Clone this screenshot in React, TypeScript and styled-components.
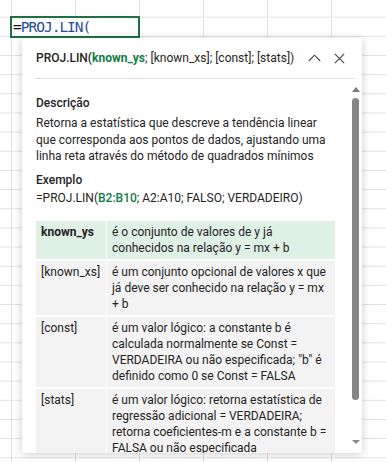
import React from 'react';
import styled, { createGlobalStyle } from 'styled-components';

const GlobalStyle = createGlobalStyle`
  html, body {
    margin: 0;
    padding: 0;
    background: #fff;
  }
  * {
    box-sizing: border-box;
  }
`;

const ROW_H = 19.17;

// planilha de fundo
const Sheet = styled.div`
  position: relative;
  width: 386px;
  height: 462px;
  overflow: hidden;
  background-color: #fff;
  background-image: linear-gradient(to right, #e1e1e1 0 1px, transparent 1px),
    linear-gradient(to bottom, #e1e1e1 0 1px, transparent 1px);
  background-size: 64px ${ROW_H}px;
  background-position: 11px 16.7px;
`;

const ActiveCell = styled.div`
  position: absolute;
  left: 10px;
  top: 16px;
  width: 130px;
  height: 22px;
  border: 2px solid #1e7145;
  background: #fff;
  display: flex;
  align-items: center;
  padding-left: 1px;
  font-family: 'DejaVu Sans Mono', monospace;
  font-size: 14.5px;
  letter-spacing: -1px;
  color: #1f4e96;
`;

const Eq = styled.span`
  color: #111;
`;

const Popup = styled.div`
  position: absolute;
  left: 22px;
  top: 38px;
  width: 340px;
  height: 415px;
  background: #fff;
  border-radius: 2px;
  box-shadow: 0 1px 9px rgba(0, 0, 0, 0.2);
  display: flex;
  flex-direction: column;
  font-family: Roboto, 'Noto Sans', sans-serif;
  color: #242424;
`;

const Header = styled.div`
  height: 40px;
  display: flex;
  align-items: center;
  padding: 0 13px 0 14px;
`;

const Title = styled.div`
  flex: 1;
  font-size: 12px;
  white-space: nowrap;
  color: #242424;
`;

const FnName = styled.span`
  font-weight: 500;
`;

const Arg = styled.span<{ active?: boolean }>`
  color: ${({ active }) => (active ? '#107c41' : 'inherit')};
  font-weight: ${({ active }) => (active ? 700 : 400)};
`;

const IconButton = styled.button`
  width: 20px;
  height: 20px;
  margin-left: 5px;
  padding: 0;
  border: none;
  background: none;
  display: flex;
  align-items: center;
  justify-content: center;
  cursor: pointer;
`;

const Divider = styled.div`
  height: 1px;
  margin: 0 8px 0 13px;
  background: #e0e0e0;
`;

const Body = styled.div`
  flex: 1;
  display: flex;
  min-height: 0;
`;

const Content = styled.div`
  flex: 1;
  overflow: hidden;
  padding: 16px 14px 0 14px;
  font-size: 12px;
  line-height: 16.33px;
`;

const SectionTitle = styled.div<{ gap?: number }>`
  font-weight: 500;
  margin-top: ${({ gap }) => gap ?? 0}px;
`;

const Paragraph = styled.p<{ gap?: number }>`
  margin: ${({ gap }) => gap ?? 0}px 0 0 0;
`;

const Highlight = styled.span`
  color: #107c41;
  font-weight: 500;
`;

const ArgTable = styled.div`
  margin-top: 15px;
  display: grid;
  grid-template-columns: 70px 1fr;
  column-gap: 1px;
  row-gap: 2px;
  line-height: 16px;
`;

const Cell = styled.div<{ active?: boolean; name?: boolean }>`
  padding: 3px 5px;
  background: ${({ active }) => (active ? '#dff0e5' : '#f3f3f3')};
  font-weight: ${({ active, name }) => (active && name ? 700 : 400)};
`;

const Scrollbar = styled.div`
  width: 13px;
  display: flex;
  flex-direction: column;
  align-items: center;
  padding: 8px 0 9px 0;
`;

const Arrow = styled.div<{ down?: boolean }>`
  width: 0;
  height: 0;
  border-left: 4px solid transparent;
  border-right: 4px solid transparent;
  ${({ down }) =>
    down ? 'border-top: 4px solid #8a8a8a;' : 'border-bottom: 5px solid #7a7a7a;'}
`;

const Thumb = styled.div`
  width: 7px;
  height: 302px;
  margin-top: 6px;
  border-radius: 4px;
  background: #868686;
`;

const Spacer = styled.div`
  flex: 1;
`;

const ChevronUp = () => (
  <svg width="13" height="8" viewBox="0 0 13 8" fill="none">
    <polyline points="0.8,7 6.5,1.2 12.2,7" stroke="#424242" strokeWidth="1.1" />
  </svg>
);

const Close = () => (
  <svg width="11" height="11" viewBox="0 0 11 11" fill="none">
    <path d="M0.8 0.8 L10.2 10.2 M10.2 0.8 L0.8 10.2" stroke="#424242" strokeWidth="1.1" />
  </svg>
);

const args = [
  { name: 'known_ys', desc: 'é o conjunto de valores de y já conhecidos na relação y = mx + b', active: true },
  { name: '[known_xs]', desc: 'é um conjunto opcional de valores x que já deve ser conhecido na relação y = mx + b' },
  {
    name: '[const]',
    desc: 'é um valor lógico: a constante b é calculada normalmente se Const = VERDADEIRA ou não especificada; "b" é definido como 0 se Const = FALSA',
  },
  {
    name: '[stats]',
    desc: 'é um valor lógico: retorna estatística de regressão adicional = VERDADEIRA; retorna coeficientes-m e a constante b = FALSA ou não especificada',
  },
];

export default function App() {
  return (
    <>
      <GlobalStyle />
      <Sheet>
        <ActiveCell>
          <Eq>=</Eq>PROJ.LIN(
        </ActiveCell>
        <Popup>
          <Header>
            <Title>
              <FnName>PROJ.LIN(</FnName>
              <Arg active>known_ys</Arg>
              <Arg>; [known_xs]; [const]; [stats])</Arg>
            </Title>
            <IconButton aria-label="Recolher">
              <ChevronUp />
            </IconButton>
            <IconButton aria-label="Fechar">
              <Close />
            </IconButton>
          </Header>
          <Divider />
          <Body>
            <Content>
              <SectionTitle>Descrição</SectionTitle>
              <Paragraph gap={4}>
                Retorna a estatística que descreve a tendência linear que corresponda aos pontos
                de dados, ajustando uma linha reta através do método de quadrados mínimos
              </Paragraph>
              <SectionTitle gap={8}>Exemplo</SectionTitle>
              <Paragraph gap={1}>
                =PROJ.LIN(<Highlight>B2:B10</Highlight>; A2:A10; FALSO; VERDADEIRO)
              </Paragraph>
              <ArgTable>
                {args.map((a) => (
                  <React.Fragment key={a.name}>
                    <Cell name active={a.active}>
                      {a.name}
                    </Cell>
                    <Cell active={a.active}>{a.desc}</Cell>
                  </React.Fragment>
                ))}
              </ArgTable>
            </Content>
            <Scrollbar>
              <Arrow />
              <Thumb />
              <Spacer />
              <Arrow down />
            </Scrollbar>
          </Body>
        </Popup>
      </Sheet>
    </>
  );
}
